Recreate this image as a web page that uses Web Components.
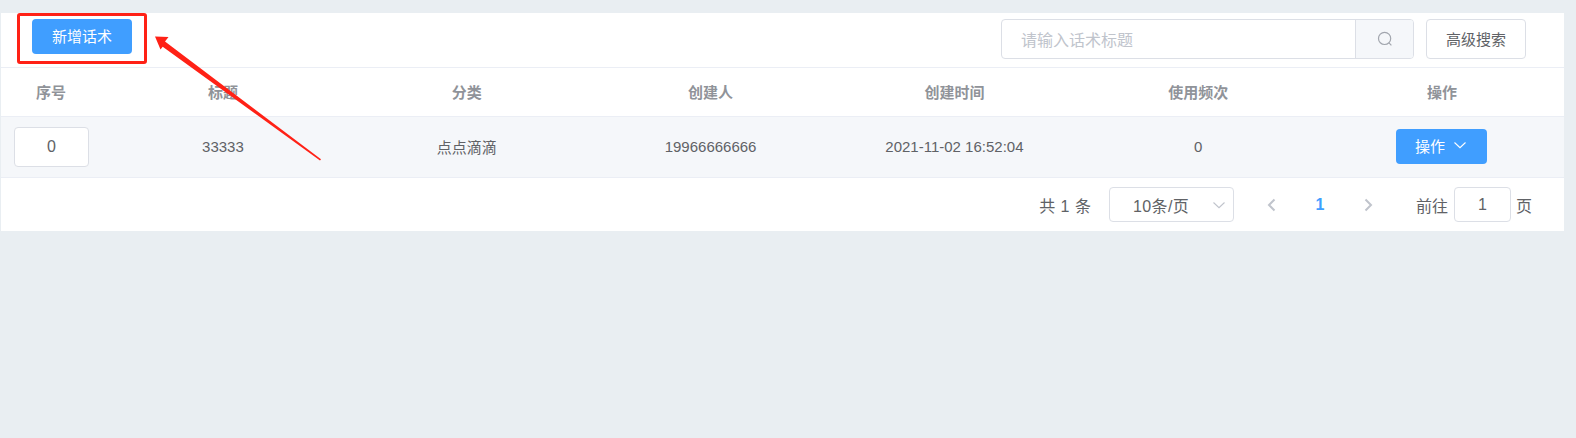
<!DOCTYPE html>
<html lang="zh-CN"><head><meta charset="utf-8"><title>话术</title>
<style>
html,body{margin:0;height:100%}
body{background:#e9eef2;font-family:"Liberation Sans","Noto Sans CJK SC",sans-serif;color:#606266;overflow:hidden}
x-row>span{padding-bottom:2px}
</style></head><body>
<script>
function def(name,css,html){
  class C extends HTMLElement{
    constructor(){super();const r=this.attachShadow({mode:'open'});r.innerHTML='<style>'+css+'</style>'+html;}
  }
  customElements.define(name,C);
}
const chev='<svg width="14" height="14" viewBox="0 0 14 14" fill="none" stroke="currentColor" stroke-width="1.1"><path d="M1.5 4.5 7 9.7l5.5-5.2"/></svg>';
def('x-btn',`:host{display:inline-flex;align-items:center;justify-content:center;box-sizing:border-box;height:35px;padding-bottom:2px;border-radius:4px;font-size:15px;background:#409eff;color:#fff;gap:8px}
:host([plain]){background:#fff;color:#606266;border:1px solid #dcdfe6;height:40px}`,'<slot></slot>');
def('x-search',`:host{display:flex;box-sizing:border-box;width:413px;height:40px;border:1px solid #dcdfe6;border-radius:4px;background:#fff;overflow:hidden}
.t{flex:1;padding-left:19px;font-size:16px;line-height:41px;color:#c0c4cc}
.i{box-sizing:border-box;width:58px;border-left:1px solid #dcdfe6;background:#f5f7fa;display:flex;align-items:center;justify-content:center;color:#a2a6ae}`,
`<div class="t">请输入话术标题</div><div class="i"><svg width="16" height="16" viewBox="0 0 16 16" fill="none" stroke="currentColor" stroke-width="1.2"><circle cx="7.6" cy="7.4" r="6.1"/><path d="M12 11.9l2.4 2.4"/></svg></div>`);
def('x-toolbar',`:host{display:flex;align-items:flex-start;box-sizing:border-box;height:55px;padding:6px 38px 0 31px;border-bottom:1px solid #ebeef5}
.sp{flex:1}.g{display:flex;gap:12px}`,`<slot name="l"></slot><div class="sp"></div><div class="g"><slot name="r"></slot></div>`);
def('x-row',`:host{display:grid;grid-template-columns:100px repeat(6,1fr);align-items:center;justify-items:center;box-sizing:border-box;font-size:15px;height:61px;background:#f5f7fa;color:#606266;border-bottom:1px solid #ebeef5}
:host([head]){height:49px;background:#fff;color:#909399;font-weight:700}`,'<slot></slot>');
def('x-num',`:host{display:flex;align-items:center;justify-content:center;box-sizing:border-box;width:75px;height:40px;border:1px solid #dcdfe6;border-radius:4px;background:#fff;font-size:16px;color:#606266;margin-left:1px}`,'<slot></slot>');
def('x-op',`:host{display:inline-block;margin:0 2px 2px 0}x-btn{width:91px}svg{display:block}`,`<x-btn>操作${chev}</x-btn>`);
def('x-pager',`:host{display:flex;align-items:center;box-sizing:border-box;height:53px;padding-right:32px;justify-content:flex-end;font-size:16px;color:#606266}
.tot{word-spacing:1px}
.sel{box-sizing:border-box;width:125px;height:35px;border:1px solid #dcdfe6;border-radius:4px;margin-left:18px;display:flex;align-items:center;padding-left:23px;position:relative;letter-spacing:.4px}
.sel svg{position:absolute;right:7px;top:10px;color:#c0c4cc}
.nav{display:grid;grid-template-columns:48px 48px 48px;justify-items:center;margin-left:14px;align-items:center}
.nav svg{display:block;color:#c0c4cc}.cur{color:#409eff;font-weight:700;font-size:16px}
.go{margin-left:24px;display:flex;align-items:center}
.box{box-sizing:border-box;width:57px;height:35px;border:1px solid #dcdfe6;border-radius:4px;margin:0 5px 0 6px;display:flex;align-items:center;justify-content:center}`,
`<span class="tot">共 1 条</span><div class="sel">10条/页${chev}</div>
<div class="nav"><svg width="14" height="16" viewBox="0 0 14 16" fill="none" stroke="currentColor" stroke-width="2"><path d="M9.5 2.5 4 8l5.5 5.5"/></svg><span class="cur">1</span><svg width="14" height="16" viewBox="0 0 14 16" fill="none" stroke="currentColor" stroke-width="2"><path d="M4.5 2.5 10 8l-5.5 5.5"/></svg></div>
<div class="go">前往<div class="box">1</div>页</div>`);
def('x-card',`:host{display:block;background:#fff;margin:13px 12px 0 1px;height:218px}`,'<slot></slot>');
def('x-mark',`:host{position:absolute;left:0;top:0;width:400px;height:200px;pointer-events:none}
.r{position:absolute;left:17px;top:13px;width:130px;height:51px;box-sizing:border-box;border:3px solid #ff2116;border-radius:3px}
svg{position:absolute;left:0;top:0}`,
`<div class="r"></div><svg width="400" height="200"><polygon fill="#ff2116" points="155,36.5 168.5,37 165,41.5 321,159.3 320,160.5 162.7,46.7 160.5,49.5"/></svg>`);
</script>
<x-card>
<x-toolbar><x-btn slot="l" style="width:100px">新增话术</x-btn>
<x-search slot="r"></x-search><x-btn slot="r" plain style="width:100px">高级搜索</x-btn></x-toolbar>
<x-row head><span>序号</span><span>标题</span><span>分类</span><span>创建人</span><span>创建时间</span><span>使用频次</span><span>操作</span></x-row>
<x-row><x-num>0</x-num><span>33333</span><span>点点滴滴</span><span>19966666666</span><span>2021-11-02 16:52:04</span><span>0</span><x-op></x-op></x-row>
<x-pager></x-pager>
</x-card>
<x-mark></x-mark>
</body></html>
